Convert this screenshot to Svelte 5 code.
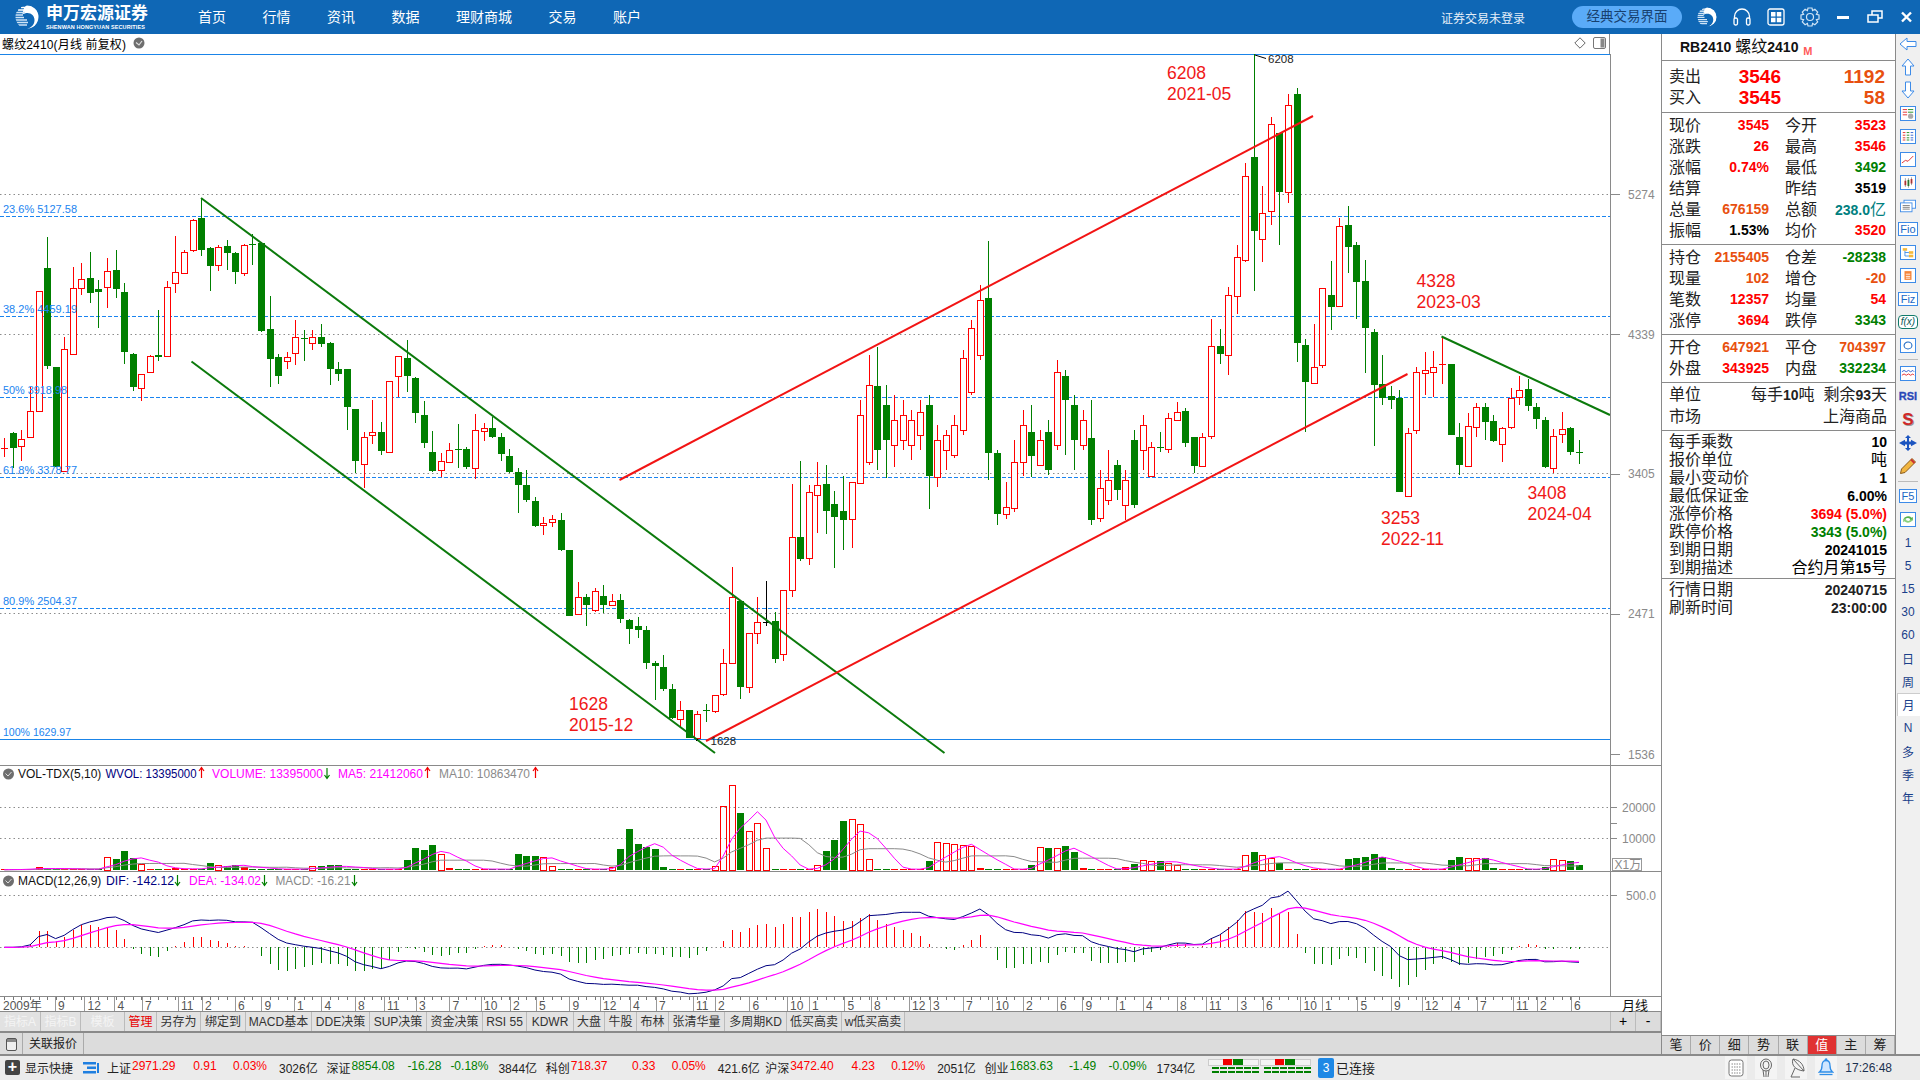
<script>
  // candle rows: [colour, high, bodyTop, bodyBottom, low], y as read off the chart (zoomed rows get scaled)
  const scaled = (rows, off) => rows.map(([c, h, t, b, l]) => [c, h / 3 + off, t / 3 + off, b / 3 + off, l / 3 + off]);
  const candles = [
    ...scaled([
      ['r',745,775,778,800],['g',725,730,776,835],['r',720,748,770,812],['r',590,664,743,743],['r',304,304,664,664],
      ['g',141,234,527,537],['g',531,531,830,830],['r',441,478,845,845],['r',232,295,493,493],['r',220,268,295,315],
      ['g',186,265,311,339],['g',270,297,305,413],['r',205,244,293,353],['g',180,240,296,323],['g',280,306,485,521],
      ['g',488,492,590,602],['r',553,553,596,632],['r',495,499,547,547],['g',360,495,500,512],['r',274,292,500,500],
      ['r',138,247,281,308],['r',181,187,250,250],['r',88,91,182,185],['g',25,84,180,198],['g',170,174,227,302],
      ['r',166,172,227,242],['g',150,168,188,240],['g',186,189,245,281],['r',163,166,250,257],['g',133,162,164,224],
      ['g',155,160,425,425],['g',318,417,506,590],['g',493,501,557,582],['r',486,502,514,537],['r',390,442,490,524],
      ['g',420,445,449,513],['r',420,440,457,480],['g',402,441,461,471],['g',457,459,536,585],['g',516,537,551,573],
      ['g',537,537,650,719],['g',657,657,812,848],['r',727,742,823,893],['r',630,727,737,762],['g',696,726,782,795],
      ['r',574,574,787,787],['r',499,499,559,622],['g',450,504,557,606],['g',562,564,668,698],['g',633,676,761,773],
      ['g',724,787,845,847],['r',790,814,842,862],['r',760,781,818,820],['g',702,777,779,833],['g',772,778,833,836],
      ['r',672,721,835,866],['r',700,715,724,752],['g',680,714,741,745],['g',728,741,791,812],['g',778,798,845,850],
    ], 190),
    ...scaled([
      ['g',25,36,74,158],['g',30,75,120,125],['g',112,123,198,200],['r',170,190,196,224],['r',165,178,187,200],
      ['g',158,180,270,273],['g',270,270,467,467],['r',365,412,464,464],['g',403,412,435,497],['r',385,394,452,456],
      ['g',375,408,435,459],['r',402,424,437,437],['g',402,420,476,488],['g',478,480,507,551],['g',472,498,510,533],
      ['g',498,510,608,627],['g',602,608,618,719],['g',586,621,687,692],['g',672,687,773,777],['r',723,751,779,800],
      ['g',750,750,834,834],['r',754,763,834,838],['g',733,749,751,785],['r',706,706,755,758],['r',567,610,704,707],
      ['r',321,412,610,610],['g',420,424,681,717],['r',520,520,683,698],['r',410,487,520,552],['k',363,485,485,497],
      ['g',456,483,596,608],['r',391,391,583,603],['r',72,232,391,411],['g',3,232,298,302],['r',75,97,295,314],
      ['r',7,76,107,218],['g',15,72,152,222],['g',93,132,170,323],['g',49,153,179,269],['r',67,67,178,263],
    ], 460),
    ['r',400,415,483,483],['r',355,385,462,465],['g',347,386,450,470],['g',385,405,440,478],['r',395,420,445,467],
    ['r',400,415,440,450],['r',410,420,445,460],['r',400,412,435,450],['g',395,405,476,509],['r',425,440,477,487],
    ['r',430,435,450,470],['r',415,425,455,458],['r',350,358,430,435],['r',320,328,392,395],['r',285,300,355,360],
    ['g',241,298,453,480],['g',450,453,514,525],['r',482,507,514,519],['r',440,462,508,512],['r',410,425,462,476],
    ['g',405,432,456,477],['r',430,440,465,466],['g',420,432,470,475],['r',360,372,445,450],['g',370,376,400,455],
    ['g',395,405,440,470],['r',410,420,445,450],['g',400,438,520,525],['r',470,488,518,522],['r',450,480,500,505],
    ['g',460,465,490,500],['r',470,480,505,520],['g',430,440,505,508],['r',415,425,450,470],
    ...scaled([
      ['r',1205,1222,1310,1310],['g',1176,1222,1226,1237],['r',1120,1135,1228,1238],['r',1087,1117,1140,1140],
      ['g',1105,1113,1208,1220],['g',1191,1191,1277,1299],['r',1180,1192,1279,1279],['r',837,919,1190,1196],
      ['g',867,918,941,971],['r',741,766,946,1005],['r',615,652,769,822],['r',370,409,662,665],['g',42,351,572,752],
      ['r',437,520,598,665],['r',232,253,514,555],['g',278,278,455,614],['r',163,196,457,488],['g',144,162,908,966],
      ['g',898,915,1025,1175],['r',852,980,1027,1027],['r',745,745,976,985],['g',663,765,800,869],['r',535,559,799,799],
      ['g',498,556,623,699],['g',606,615,725,838],['g',660,723,863,998],['g',868,876,1034,1217],['g',945,1033,1075,1095],
      ['g',1037,1069,1082,1107],['g',1051,1074,1355,1357],['r',1165,1180,1369,1369],['r',982,997,1171,1181],
      ['r',937,991,1000,1065],['r',933,980,994,1072],['r',890,973,975,1031],['g',972,972,1184,1184],['g',1149,1191,1274,1306],
      ['r',1119,1159,1279,1279],['r',1090,1102,1162,1190],['g',1090,1102,1148,1199],['g',1125,1144,1205,1207],
      ['r',1162,1165,1213,1265],['r',1044,1075,1162,1166],['r',1008,1049,1070,1094],['g',1016,1048,1100,1112],
      ['g',1090,1102,1139,1166],['g',1132,1141,1281,1283],['r',1167,1189,1285,1299],['r',1116,1166,1180,1209],
      ['g',1162,1165,1238,1246],['g',1200,1237,1238,1271],
    ], 40),
  ];

  const cx = (i) => 4.3 + 8.558 * i;
  const px = (v) => Math.round(v) + 0.5;
  const colour = { r: '#ff0000', g: '#007f00', k: '#000000' };

  // volume bar tops read from the pane, everything else is a short bar on the base line
  const volTop = {
    4:322,5:324,6:328,12:292,13:297,14:273,15:294,16:312,17:327,20:324,24:309,25:316,26:317,27:316,28:322,
    36:319,37:318,38:315,39:316,47:300,48:264,49:270,50:255,51:282,52:324,60:282,61:288,62:288,63:292,64:319,
    71:320,72:267,73:207,74:252,75:262,76:267,77:320,83:319,84:139,85:75,86:159,87:213,88:190,89:265,90:328,
    95:316,96:272,97:240,98:183,99:178,100:193,101:298,108:303,109:247,110:250,111:253,112:256,113:258,114:325,
    120:316,121:262,122:264,123:264,124:258,125:275,126:324,131:322,132:312,133:300,134:303,135:303,136:308,137:314,
    145:286,146:276,147:285,148:293,149:310,150:326,157:297,158:294,159:291,160:282,161:291,162:324,
    169:300,170:291,171:295,172:295,173:295,174:324,180:320,181:298,182:300,183:303,184:315,
  };
  const volBase = 870;
  const vols = candles.map((_, i) => (330 - (volTop[i] ?? (i % 3 === 0 ? 326 : 328))) / 3);
  const rolling = (n) => vols.map((_, i) => {
    const part = vols.slice(Math.max(0, i - n + 1), i + 1);
    return part.reduce((a, b) => a + b, 0) / n;
  });
  const toLine = (vals, f) => vals.map((v, i) => `${cx(i).toFixed(1)},${f(v).toFixed(1)}`).join(' ');
  const ma5Line = toLine(rolling(5), (v) => volBase - v);
  const ma10Line = toLine(rolling(10), (v) => volBase - v);

  // macd worked out from the closes
  const price = (y) => 5274 - (y - 194) * 6.69;
  const closes = candles.map(([c, , t, b]) => price(c === 'r' ? t : b));
  const ema = (vals, n) => {
    const out = [];
    vals.forEach((v, i) => out.push(i ? out[i - 1] + (v - out[i - 1]) * 2 / (n + 1) : v));
    return out;
  };
  const e12 = ema(closes, 12);
  const e26 = ema(closes, 26);
  const dif = e12.map((v, i) => v - e26[i]);
  const dea = ema(dif, 9);
  const zero = 947.3;
  const my = (v) => zero - v * 0.1047;
  const difLine = toLine(dif, my);
  const deaLine = toLine(dea, my);

  const fibs = [
    { y: 216, ty: 213, text: '23.6% 5127.58', w: 74 },
    { y: 316, ty: 313, text: '38.2% 4459.19', w: 74 },
    { y: 397, ty: 394, text: '50% 3918.98', w: 64 },
    { y: 477, ty: 474, text: '61.8% 3378.77', w: 74 },
    { y: 608, ty: 605, text: '80.9% 2504.37', w: 74 },
    { y: 739.5, ty: 736, text: '100% 1629.97', w: 68 },
  ];
  const grid = [194, 334, 473, 613];
  const axis = [
    { y: 194, t: '5274' }, { y: 334, t: '4339' }, { y: 473.5, t: '3405' }, { y: 613.5, t: '2471' }, { y: 754, t: '1536' },
  ];
  const notes = [
    { x: 1167, y: 79, a: '6208', b: '2021-05' },
    { x: 1416.5, y: 287, a: '4328', b: '2023-03' },
    { x: 1527.5, y: 499, a: '3408', b: '2024-04' },
    { x: 1381, y: 524, a: '3253', b: '2022-11' },
    { x: 569, y: 710, a: '1628', b: '2015-12' },
  ];
  const months = [
    [58,'9'],[87.5,'12'],[117.6,'4'],[145,'7'],[181,'11'],[205,'2'],[238,'6'],[264.5,'9'],[297,'1'],[324.5,'4'],[358,'8'],
    [387,'11'],[419,'3'],[452.5,'7'],[484,'10'],[513,'2'],[539,'5'],[572.5,'9'],[603,'12'],[633,'4'],[659,'7'],[696,'11'],
    [718,'2'],[752.6,'6'],[790,'10'],[812,'1'],[847.5,'5'],[874,'8'],[912,'12'],[933,'3'],[966,'7'],[995.5,'10'],[1026,'2'],
    [1060,'6'],[1085.5,'9'],[1119,'1'],[1146,'4'],[1180,'8'],[1209,'11'],[1240.5,'3'],[1266,'6'],[1303.5,'10'],[1325,'1'],
    [1360.5,'5'],[1394,'9'],[1425,'12'],[1454,'4'],[1480,'7'],[1516,'11'],[1540,'2'],[1574,'6'],
  ];

  const nav = ['首页', '行情', '资讯', '数据', '理财商城', '交易', '账户'];
  const tabs = [
    ['指标A', 41], ['指标B', 40], ['模板', 44], ['管理', 32], ['另存为', 44], ['绑定到', 45], ['MACD基本', 66], ['DDE决策', 58],
    ['SUP决策', 57], ['资金决策', 56], ['RSI 55', 44], ['KDWR', 47], ['大盘', 31], ['牛股', 32], ['布林', 32], ['张清华量', 56],
    ['多周期KD', 62], ['低买高卖', 55], ['w低买高卖', 63],
  ];
  const sideTabs = ['笔', '价', '细', '势', '联', '值', '主', '筹'];
  const periods = ['1', '5', '15', '30', '60', '日', '周', '月', 'N', '多', '季', '年'];

  const quote = [
    ['现价', '3545', 'r', '今开', '3523', 'r'],
    ['涨跌', '26', 'r', '最高', '3546', 'r'],
    ['涨幅', '0.74%', 'r', '最低', '3492', 'g'],
    ['结算', '', 'k', '昨结', '3519', 'k'],
    ['总量', '676159', 'o', '总额', '238.0亿', 't'],
    ['振幅', '1.53%', 'k', '均价', '3520', 'r'],
  ];
  const position = [
    ['持仓', '2155405', 'o', '仓差', '-28238', 'g'],
    ['现量', '102', 'o', '增仓', '-20', 'o'],
    ['笔数', '12357', 'r', '均量', '54', 'r'],
    ['涨停', '3694', 'r', '跌停', '3343', 'g'],
  ];
  const flow = [
    ['开仓', '647921', 'o', '平仓', '704397', 'o'],
    ['外盘', '343925', 'r', '内盘', '332234', 'g'],
  ];
  const specs = [
    ['每手乘数', '10', 'k'], ['报价单位', '吨', 'k'], ['最小变动价', '1', 'k'], ['最低保证金', '6.00%', 'k'],
    ['涨停价格', '3694 (5.0%)', 'r'], ['跌停价格', '3343 (5.0%)', 'g'], ['到期日期', '20241015', 'k'], ['到期描述', '合约月第15号', 'k'],
  ];
  const markets = [
    ['上证', '2971.29', 'r', '0.91', 'r', '0.03%', 'r', '3026亿'],
    ['深证', '8854.08', 'g', '-16.28', 'g', '-0.18%', 'g', '3844亿'],
    ['科创', '718.37', 'r', '0.33', 'r', '0.05%', 'r', '421.6亿'],
    ['沪深', '3472.40', 'r', '4.23', 'r', '0.12%', 'r', '2051亿'],
    ['创业', '1683.63', 'g', '-1.49', 'g', '-0.09%', 'g', '1734亿'],
  ];

  // digits come out bold in this panel, chinese stays regular
  const parts = (text) => text.split(/([\u4e00-\u9fff]+)/);
</script>

{#snippet logo(size)}
  <svg class="swirl" width={size} height={size} viewBox="0 0 24 24">
    <defs>
      <clipPath id="ring-{size}"><circle cx="12" cy="12" r="11.5" /></clipPath>
    </defs>
    <g clip-path="url(#ring-{size})">
      <path d="M12 0a12 12 0 0 1 0 24c5-1.500 7.500-5 7.500-9 0-4-3-7-7-7-2 0-3.500.5-5 1.500C8 4 10 1 12 0z" fill="#fff" />
      <path d="M0 7.500h10M0 10h8M0 12.500h9M0 15h12M0 17.500h13M0 20h12" stroke="#cfe4f6" stroke-width="1.500" />
      <path d="M6 2.500h6M3 5h7" stroke="#fff" stroke-width="1.500" />
    </g>
  </svg>
{/snippet}

{#snippet val(text, cls)}
  <b class={cls}>{#each parts(text) as p, i}{#if i % 2}<span class="cjk">{p}</span>{:else}{p}{/if}{/each}</b>
{/snippet}

{#snippet row(cells)}
  <div class="q-row">
    <div class="q-cell"><span>{cells[0]}</span>{@render val(cells[1], cells[2])}</div>
    <div class="q-cell"><span>{cells[3]}</span>{@render val(cells[4], cells[5])}</div>
  </div>
{/snippet}

<div class="app">
  <header class="topbar">
    <div class="brand">
      {@render logo(24)}
      <div class="brand-name">
        <strong>申万宏源证券</strong>
        <small>SHENWAN HONGYUAN SECURITIES</small>
      </div>
    </div>
    <nav class="nav">
      {#each nav as item}<span>{item}</span>{/each}
    </nav>
    <div class="login">证券交易未登录</div>
    <div class="pill">经典交易界面</div>
    <div class="top-icons">
      {@render logo(20)}
      <svg width="20" height="20" viewBox="0 0 20 20" fill="none" stroke="#fff" stroke-width="1.300"><path d="M2.500 12V9.500a7.500 7.500 0 0 1 15 0V12" /><rect x="2" y="11" width="3.500" height="7" rx="1.500" /><rect x="14.500" y="11" width="3.500" height="7" rx="1.500" /></svg>
      <svg width="18" height="18" viewBox="0 0 18 18"><rect x="1" y="1" width="16" height="16" rx="2" fill="none" stroke="#fff" stroke-width="1.300" /><path d="M4 4h4.500v4.500H4zM9.800 4h4.500v4.500H9.800zM4 9.800h4.500v4.500H4zM9.800 9.800h4.500v4.500H9.800z" fill="#fff" /></svg>
      <svg width="20" height="20" viewBox="0 0 20 20" fill="none" stroke="#cfe4f6" stroke-width="1.200"><path d="M8 1.500h4l.6 2.600 2.300-1.300 2.800 2.800-1.300 2.300 2.600.6v4l-2.600.6 1.300 2.300-2.800 2.800-2.300-1.300-.6 2.600H8l-.6-2.600-2.300 1.300-2.800-2.800 1.300-2.300-2.600-.6v-4l2.600-.6-1.300-2.300 2.800-2.800 2.300 1.300z" transform="translate(0 -.5)" /><circle cx="10" cy="10" r="3.500" /></svg>
      <svg class="win" width="13" height="14" viewBox="0 0 13 14"><rect y="6" width="12" height="3" fill="#fff" /></svg>
      <svg class="win" width="16" height="14" viewBox="0 0 16 14" fill="none" stroke="#fff" stroke-width="1.500"><rect x="5" y="1" width="10" height="7" /><rect x="1" y="5" width="10" height="7" fill="#0f67b5" /></svg>
      <svg class="win" width="13" height="14" viewBox="0 0 13 14" stroke="#fff" stroke-width="2.400"><path d="M2 2.500l9 9M11 2.500l-9 9" /></svg>
    </div>
  </header>

  <div class="work">
    <div class="left">
      <div class="title-row">
        <div class="title-main">
          <span class="title-text">螺纹2410(月线 前复权)</span>
          <svg class="check" width="12" height="12" viewBox="0 0 12 12"><circle cx="6" cy="6" r="5.500" fill="#6e6e6e" /><path d="M3 5.500l3 2.500 3-4" fill="none" stroke="#ddd" stroke-width="1.200" /></svg>
          <span class="title-tools">
            <svg width="12" height="12" viewBox="0 0 12 12"><path d="M6 .8L11.200 6 6 11.200.8 6z" fill="#fff" stroke="#666" /></svg>
            <svg width="13" height="12" viewBox="0 0 13 12"><rect x=".5" y=".5" width="12" height="11" rx="1.500" fill="#fff" stroke="#777" /><rect x="7.500" y="1.500" width="4" height="9" fill="#888" /></svg>
          </span>
        </div>
      </div>

      <svg class="chart" width="1661" height="958" viewBox="0 54 1661 958">
        <!-- main pane grid -->
        {#each grid as y}<line class="dots" x1="0" x2="1611" y1={px(y)} y2={px(y)} />{/each}
        {#each fibs as f}
          {#if f.y < 700}<line class="fib" x1="0" x2="1611" y1={px(f.y)} y2={px(f.y)} />{/if}
        {/each}
        <line class="solid-blue" x1="0" x2="1611" y1="54.500" y2="54.500" />
        <line class="solid-blue" x1="0" x2="1611" y1="739.500" y2="739.500" />

        <!-- candles -->
        <g shape-rendering="crispEdges">
          {#each candles as [c, hi, top, bot, lo], i}
            {@const x = Math.round(cx(i))}
            <line x1={x + 0.5} x2={x + 0.5} y1={hi} y2={lo} stroke={colour[c]} />
            {#if bot - top < 1.500}
              <line x1={x - 3} x2={x + 4} y1={px(top)} y2={px(top)} stroke={colour[c]} />
            {:else if c === 'r'}
              <rect x={x - 2.500} y={px(top)} width="6" height={Math.round(bot - top)} fill="#fff" stroke={colour[c]} />
            {:else}
              <rect x={x - 3} y={Math.round(top)} width="7" height={Math.round(bot - top)} fill={colour[c]} />
            {/if}
          {/each}
        </g>
        {#each fibs as f}<text class="fib-label" x="3" y={f.ty} textLength={f.w} lengthAdjust="spacingAndGlyphs">{f.text}</text>{/each}

        <!-- hand drawn lines -->
        <line class="tl-green" x1="201" y1="198" x2="944.500" y2="753" />
        <line class="tl-green" x1="191.500" y1="361.500" x2="715" y2="753" />
        <line class="tl-green" x1="1441.500" y1="336.500" x2="1610" y2="415" />
        <line class="tl-red" x1="619.500" y1="480" x2="1313" y2="116" />
        <line class="tl-red" x1="706" y1="741" x2="1407.500" y2="374" />

        {#each notes as n}
          <text class="note" x={n.x} y={n.y}>{n.a}</text>
          <text class="note" x={n.x} y={n.y + 21}>{n.b}</text>
        {/each}
        <path d="M1255 55l11 3.500" stroke="#000" fill="none" />
        <text class="mark" x="1268" y="63">6208</text>
        <path d="M698 739l-2 2" stroke="#000" fill="none" />
        <text class="mark" x="710.500" y="745">1628</text>

        <!-- value axis -->
        <line class="frame" x1="1610.500" x2="1610.500" y1="54" y2="997" />
        {#each axis as a}
          <line class="frame" x1="1611" x2="1620" y1={px(a.y)} y2={px(a.y)} />
          <text class="axis" x="1628" y={a.y + 4.500}>{a.t}</text>
        {/each}
        <line class="frame" x1="0" x2="1661" y1="765.500" y2="765.500" />
        <line class="frame" x1="0" x2="1661" y1="871.500" y2="871.500" />
        <line class="frame" x1="0" x2="1661" y1="996.500" y2="996.500" />
        <line class="frame" x1="0" x2="1661" y1="1011.500" y2="1011.500" />

        <!-- volume pane -->
        <line class="dots" x1="0" x2="1611" y1="807.500" y2="807.500" />
        <line class="dots" x1="0" x2="1611" y1="838.500" y2="838.500" />
        <g shape-rendering="crispEdges">
          {#each vols as v, i}
            {@const x = Math.round(cx(i))}
            {@const c = colour[candles[i][0] === 'k' ? 'r' : candles[i][0]]}
            {#if candles[i][0] === 'g' || v < 3}
              <rect x={x - 3} y={Math.round(volBase - v)} width="7" height={Math.max(1, Math.round(v))} fill={c} />
            {:else}
              <rect x={x - 2.500} y={Math.round(volBase - v) + 0.5} width="6" height={Math.round(v)} fill="none" stroke={c} />
            {/if}
          {/each}
        </g>
        <polyline class="ma10" points={ma10Line} />
        <polyline class="ma5" points={ma5Line} />
        <text class="legend" x="18" y="778">VOL-TDX(5,10)</text>
        <circle class="dot" cx="8.500" cy="774" r="5.500" />
        <path class="dot-tick" d="M5.500 773.500l2.500 2.500 3.500-4" />
        <text class="legend navy" x="105.500" y="778" textLength="91" lengthAdjust="spacingAndGlyphs">WVOL: 13395000</text>
        <path class="arr r" d="M201.500 778v-10m-2.500 3l2.500-3.500 2.500 3.500" />
        <text class="legend pink" x="212" y="778" textLength="111" lengthAdjust="spacingAndGlyphs">VOLUME: 13395000</text>
        <path class="arr g" d="M327 768v10m-2.500-3l2.500 3.500 2.500-3.500" />
        <text class="legend pink" x="338" y="778" textLength="85" lengthAdjust="spacingAndGlyphs">MA5: 21412060</text>
        <path class="arr r" d="M427.500 778v-10m-2.500 3l2.500-3.500 2.500 3.500" />
        <text class="legend grey" x="439" y="778" textLength="91" lengthAdjust="spacingAndGlyphs">MA10: 10863470</text>
        <path class="arr r" d="M535.500 778v-10m-2.500 3l2.500-3.500 2.500 3.500" />
        <text class="axis" x="1622" y="811.500">20000</text>
        <text class="axis" x="1622" y="842.500">10000</text>
        <line class="frame" x1="1611" x2="1617" y1="807.500" y2="807.500" />
        <line class="frame" x1="1611" x2="1617" y1="823.500" y2="823.500" />
        <line class="frame" x1="1611" x2="1617" y1="838.500" y2="838.500" />
        <rect x="1612.500" y="858.500" width="29" height="12" fill="#fff" stroke="#999" />
        <text class="axis" x="1614.500" y="869">X1万</text>

        <!-- macd pane -->
        <line class="dots" x1="0" x2="1611" y1="895.500" y2="895.500" />
        <line class="dots" x1="0" x2="1611" y1={px(zero)} y2={px(zero)} />
        <text class="axis" x="1626" y="899.500">500.0</text>
        <line class="frame" x1="1611" x2="1617" y1="895.500" y2="895.500" />
        <g shape-rendering="crispEdges">
          {#each dif as v, i}
            {@const m = 2 * (v - dea[i])}
            <line x1={Math.round(cx(i)) + 0.5} x2={Math.round(cx(i)) + 0.5} y1={zero} y2={my(m)} stroke={m >= 0 ? '#ff0000' : '#007f00'} />
          {/each}
        </g>
        <polyline class="dif" points={difLine} />
        <polyline class="dea" points={deaLine} />
        <text class="legend" x="18" y="885">MACD(12,26,9)</text>
        <circle class="dot" cx="8.500" cy="881" r="5.500" />
        <path class="dot-tick" d="M5.500 880.500l2.500 2.500 3.500-4" />
        <text class="legend navy" x="106" y="885" textLength="68" lengthAdjust="spacingAndGlyphs">DIF: -142.12</text>
        <path class="arr g" d="M177.500 875v10m-2.500-3l2.500 3.500 2.500-3.500" />
        <text class="legend pink" x="189" y="885" textLength="72" lengthAdjust="spacingAndGlyphs">DEA: -134.02</text>
        <path class="arr g" d="M264.500 875v10m-2.500-3l2.500 3.500 2.500-3.500" />
        <text class="legend grey" x="275.500" y="885" textLength="75" lengthAdjust="spacingAndGlyphs">MACD: -16.21</text>
        <path class="arr g" d="M354.500 875v10m-2.500-3l2.500 3.500 2.500-3.500" />

        <!-- date axis -->
        <g shape-rendering="crispEdges">
          {#each candles as _, i}
            <line x1={Math.round(cx(i)) + 0.5} x2={Math.round(cx(i)) + 0.5} y1="997" y2="1000" stroke="#777" />
          {/each}
          {#each months as [x]}
            <line x1={Math.round(x - 3.500) + 0.5} x2={Math.round(x - 3.500) + 0.5} y1="997" y2="1011" stroke="#999" />
          {/each}
        </g>
        <text class="date" x="3" y="1010">2009年</text>
        {#each months as [x, t]}<text class="date" x={x} y="1010">{t}</text>{/each}
        <text class="period" x="1622" y="1010">月线</text>
      </svg>

      <div class="tab-row">
        <div class="tabs">
          {#each tabs as [t, w], i}
            <span class="tab" class:off={i < 3} class:hot={i === 3} style="width: {w}px">{t}</span>
          {/each}
        </div>
        <div class="zoom-btns"><span>+</span><span>-</span></div>
      </div>
      <div class="link-row">
        <span class="link-icon"><i></i></span>
        <span class="link-tab">关联报价</span>
      </div>
    </div>

    <aside class="panel">
      <div class="p-head">RB2410 <span class="cjk">螺纹</span>2410 <em>M</em></div>
      <div class="p-sec sell">
        <div class="sell-row"><span>卖出</span><b class="r">3546</b><b class="o">1192</b></div>
        <div class="sell-row"><span>买入</span><b class="r">3545</b><b class="o">58</b></div>
      </div>
      <div class="p-sec">{#each quote as q}{@render row(q)}{/each}</div>
      <div class="p-sec">{#each position as q}{@render row(q)}{/each}</div>
      <div class="p-sec">{#each flow as q}{@render row(q)}{/each}</div>
      <div class="p-sec unit">
        <div class="wide"><span>单位</span><span class="mix">每手<b>10</b>吨&nbsp; 剩余<b>93</b>天</span></div>
        <div class="wide"><span>市场</span><span>上海商品</span></div>
      </div>
      <div class="p-sec spec">
        {#each specs as s}
          <div class="wide"><span>{s[0]}</span>{@render val(s[1], s[2])}</div>
        {/each}
      </div>
      <div class="p-fill spec">
        <div class="wide"><span>行情日期</span><b>20240715</b></div>
        <div class="wide"><span>刷新时间</span><b>23:00:00</b></div>
      </div>
      <div class="side-tabs">
        {#each sideTabs as t}<span class:on={t === '值'}>{t}</span>{/each}
      </div>
    </aside>

    <div class="tools">
      <span class="tool"><svg width="18" height="14" viewBox="0 0 18 14"><path d="M1 7l7-6v3.500h9v5H8V13z" fill="#fff" stroke="#3d8be8" /></svg></span>
      <span class="tool"><svg width="14" height="18" viewBox="0 0 14 18"><path d="M7 1l6 7H9.500v9h-5V8H1z" fill="#fff" stroke="#3d8be8" /></svg></span>
      <span class="tool"><svg width="14" height="18" viewBox="0 0 14 18"><path d="M7 17l6-7H9.500V1h-5v9H1z" fill="#fff" stroke="#3d8be8" /></svg></span>
      <span class="tool"><svg class="box" width="14" height="13" viewBox="0 0 16 14"><path d="M2 2.500h5M2 5.500h5M2 8.500h5" stroke="#e02020" /><path d="M8 2.500h6M8 5.500h6" stroke="#118811" /><circle cx="11" cy="10" r="3" fill="#aaa" /></svg></span>
      <span class="tool"><svg class="box" width="14" height="13" viewBox="0 0 16 14"><path d="M2 2.500h3M2 5.500h3M2 8.500h3M2 11h3" stroke="#e02020" /><path d="M6.500 2.500h3M6.500 5.500h3M6.500 8.500h3M6.500 11h3" stroke="#118811" /><path d="M11 2.500h3M11 5.500h3M11 8.500h3M11 11h3" stroke="#2255cc" /></svg></span>
      <span class="tool"><svg class="box" width="14" height="13" viewBox="0 0 16 14"><path d="M1 11l4-3 3 1 6-6" fill="none" stroke="#e02020" /></svg></span>
      <span class="tool"><svg class="box" width="14" height="13" viewBox="0 0 16 14"><path d="M4 5h2v5H4zM11 3h2v5h-2z" fill="#e02020" /><path d="M7.500 4h2v7h-2z" fill="#118811" /><path d="M5 2v10M8.500 2v11M12 1v9" stroke="#555" stroke-width=".6" /></svg></span>
      <span class="tool"><svg width="16" height="14" viewBox="0 0 18 14"><rect x="4.500" y=".5" width="13" height="9" fill="#fff" stroke="#3d8be8" /><rect x=".5" y="3.500" width="13" height="10" fill="#fff" stroke="#3d8be8" /><path d="M3 6.500h8M3 8.500h8M3 10.500h8" stroke="#777" /></svg></span>
      <span class="tool"><b class="tag">Fio</b></span>
      <span class="tool"><svg class="box" width="14" height="13" viewBox="0 0 16 14"><rect x="2" y="2" width="5" height="3" fill="#f6b93b" /><rect x="9" y="5.500" width="5" height="3" fill="#f6b93b" /><rect x="9" y="9.500" width="5" height="3" fill="#f6b93b" /><path d="M4.500 5v6H9M4.500 7H9" fill="none" stroke="#3d8be8" /></svg></span>
      <span class="tool"><svg class="box" width="14" height="13" viewBox="0 0 16 14"><rect x="4" y="2" width="8" height="10" fill="#f5853a" /><path d="M5.500 5.500h5M5.500 8h5M5.500 10h5" stroke="#fff" /></svg></span>
      <span class="tool"><b class="tag">Fiz</b></span>
      <span class="tool"><b class="tag fx">f(x)</b></span>
      <span class="tool"><svg class="box" width="14" height="13" viewBox="0 0 16 14"><ellipse cx="8" cy="7" rx="4.500" ry="4" fill="none" stroke="#1c68c4" stroke-width="1.200" /></svg></span>
      <i class="sep"></i>
      <span class="tool"><svg class="box" width="14" height="13" viewBox="0 0 16 14"><path d="M1 5l2.500-1.500L6 5l2.500-1.500L11 5l2.500-1.500L15 5" fill="none" stroke="#2255cc" /><path d="M1 9l2.500-1.500L6 9l2.500-1.500L11 9l2.500-1.500L15 9" fill="none" stroke="#e02020" /></svg></span>
      <span class="tool"><b class="rsi">RSI</b></span>
      <span class="tool"><b class="ess">S</b></span>
      <span class="tool"><svg width="18" height="16" viewBox="0 0 18 16"><path d="M9 0l3 3H10v3.500h2V4.800L18 8l-6 3.200V9.500h-2V13h2l-3 3-3-3h2V9.500H6v1.700L0 8l6-3.200v1.700h2V3H6z" fill="#1c55c0" /></svg></span>
      <span class="tool"><svg width="18" height="18" viewBox="0 0 18 18"><path d="M13 1.500l3.500 3.500L6 15.500 1.500 16.500 2.500 12z" fill="#f2b640" stroke="#8a5a1a" /><path d="M12 2.500l3.500 3.500" stroke="#c33" stroke-width="2" /></svg></span>
      <i class="sep wide-sep"></i>
      <span class="tool"><b class="tag">F5</b></span>
      <span class="tool"><svg class="box" width="14" height="13" viewBox="0 0 16 14"><path d="M3 7a5 4 0 0 1 9-2l1.500-1v4h-4l1.200-1A3.500 3 0 0 0 4.500 7z" fill="#55b04a" /><path d="M13 7a5 4 0 0 1-9 2l-1.500 1V6h4L5.300 7a3.500 3 0 0 0 6.200 0z" fill="#8ad07e" /></svg></span>
      {#each periods as p}
        <span class="tool per" class:now={p === '月'}>{p}</span>
      {/each}
    </div>
  </div>

  <footer class="status">
    <span class="plus">+</span>
    <span class="quick">显示快捷</span>
    <svg class="quick-icon" width="17" height="14" viewBox="0 0 17 14"><path d="M0 1h13v2.500H0zM4 5.500h9V8H4zM0 10h13v2.500H0z" fill="#1f7fe0" /><path d="M15 2v10" stroke="#1f7fe0" stroke-width="2" /></svg>
    <div class="markets">
      {#each markets as m}
        <div class="market">
          <span>{m[0]}</span>
          <span class={m[2]}>{m[1]}</span>
          <span class="mid {m[4]}">{m[3]}</span>
          <span class="mid {m[6]}">{m[5]}</span>
          <span>{m[7]}</span>
        </div>
      {/each}
    </div>
    <svg class="meter" width="104" height="17" viewBox="0 0 104 17">
      {#each [0, 52] as off}
        <g transform="translate({off} 0)" shape-rendering="crispEdges">
          <rect x="0" y="0" width="50" height="6" fill="#f4f4f4" stroke="#ccc" />
          <rect x="15" y="0" width="9" height="6" fill="#f00000" />
          <rect x="25" y="0" width="10" height="6" fill="#007f00" />
          {#each [0, 1, 2, 3, 4, 5] as k}
            <rect x={4 + k * 8} y="8" width="7" height="2" fill="#007f00" />
            <rect x={4 + k * 8} y="12" width="7" height="2" fill="#007f00" />
          {/each}
        </g>
      {/each}
    </svg>
    <span class="badge">3</span>
    <span class="conn">已连接</span>
    <div class="status-icons">
      <span><svg width="16" height="18" viewBox="0 0 16 18"><rect x="1" y="1" width="14" height="16" rx="2.500" fill="#fff" stroke="#777" /><path d="M3.500 5h9M3.500 8h9M3.500 11h9M3.500 14h9" stroke="#888" stroke-dasharray="1.500 1" /></svg></span>
      <span><svg width="14" height="20" viewBox="0 0 14 20" fill="none" stroke="#666"><ellipse cx="7" cy="7" rx="5.500" ry="6" /><ellipse cx="7" cy="7" rx="3" ry="4" /><path d="M4 12l1 7M10 12l-1 7M7 13v6" /></svg></span>
      <span><svg width="18" height="20" viewBox="0 0 18 20" fill="none" stroke="#666"><path d="M6 1c7 1 11 6 11 12L6 1zM6 1c-2 6 2 11 11 12" /><path d="M8 10l-4 9h9" /></svg></span>
      <span><svg width="16" height="20" viewBox="0 0 16 20" fill="#cfe6ff" stroke="#2f8ee8" stroke-width="1.300"><path d="M8 2.500c3 0 4 2.500 4 5s.5 5 2.500 6.500h-13C3.500 12.500 4 10 4 7.500s1-5 4-5z" /><path d="M1.500 16.500h13" /><circle cx="8" cy="1.800" r=".8" /></svg></span>
    </div>
    <span class="clock">17:26:48</span>
  </footer>
</div>

<style>
  :global(body) {
    margin: 0;
    background: #fff;
  }

  .app {
    --cjk: "Liberation Sans", "Noto Sans CJK SC", sans-serif;
    width: 1920px;
    height: 1080px;
    display: flex;
    flex-direction: column;
    overflow: hidden;
    font-family: var(--cjk);
    font-size: 12px;
    color: #000;
  }

  .topbar {
    height: 34px;
    flex: none;
    display: flex;
    align-items: center;
    background: #0f67b5;
    color: #fff;
  }

  .brand {
    display: flex;
    align-items: center;
    gap: 7px;
    width: 198px;
    padding-left: 15px;
    box-sizing: border-box;
  }

  .swirl {
    flex: none;
  }

  .brand-name {
    display: flex;
    flex-direction: column;
  }

  .brand-name strong {
    font-size: 17px;
    line-height: 19px;
    font-weight: 700;
  }

  .brand-name small {
    font-size: 5.500px;
    line-height: 8px;
    font-weight: 700;
    white-space: nowrap;
    letter-spacing: 0.1px;
  }

  .nav {
    display: flex;
    gap: 36.500px;
    font-size: 14px;
    width: 1243px;
    padding-bottom: 2px;
  }

  .login {
    width: 131px;
    font-size: 12px;
    color: #e4eef8;
  }

  .pill {
    width: 110px;
    height: 22px;
    border-radius: 11px;
    background: #5aabf8;
    color: #17406e;
    font-size: 13.500px;
    text-align: center;
    line-height: 22px;
  }

  .top-icons {
    display: flex;
    align-items: center;
    gap: 15px;
    margin-left: 15px;
  }

  .win {
    margin-left: 2px;
  }

  .work {
    height: 1020px;
    flex: none;
    display: flex;
  }

  .left {
    width: 1661px;
    flex: none;
    display: flex;
    flex-direction: column;
  }

  .title-row {
    height: 20px;
    flex: none;
    display: flex;
  }

  .title-main {
    width: 1610px;
    display: flex;
    align-items: center;
    padding: 0 0 2px 2px;
    box-sizing: border-box;
    border-right: 1px solid #888;
  }

  .title-text {
    font-size: 12px;
    letter-spacing: 0.15px;
    margin-right: 7px;
  }

  .title-tools {
    margin-left: auto;
    display: flex;
    align-items: center;
    gap: 7px;
    padding-right: 3px;
  }

  .chart {
    display: block;
    flex: none;
  }

  .chart text {
    font-family: "Liberation Sans", "Noto Sans CJK SC", sans-serif;
  }

  .dots {
    stroke: #8c8c8c;
    stroke-dasharray: 1.500 3;
  }

  .fib {
    stroke: #1a84f0;
    stroke-dasharray: 4 2;
  }

  .solid-blue {
    stroke: #1a84e8;
  }

  .fib-label {
    font-size: 11.500px;
    fill: #1a84f0;
  }

  .tl-green {
    stroke: #0c7a0c;
    stroke-width: 2;
  }

  .tl-red {
    stroke: #f21414;
    stroke-width: 2;
  }

  .note {
    font-size: 17.500px;
    fill: #f01818;
  }

  .mark {
    font-size: 11.500px;
    fill: #222;
  }

  .frame {
    stroke: #8a8a8a;
  }

  .axis {
    font-size: 12px;
    fill: #8a8a8a;
  }

  .legend {
    font-size: 12px;
    fill: #111;
  }

  .legend.navy {
    fill: #000080;
  }

  .legend.pink {
    fill: #ff00ff;
  }

  .legend.grey {
    fill: #8a8a8a;
  }

  .arr {
    fill: none;
    stroke-width: 1.200;
  }

  .arr.r {
    stroke: #f00000;
  }

  .arr.g {
    stroke: #007f00;
  }

  .dot {
    fill: #6e6e6e;
  }

  .dot-tick {
    fill: none;
    stroke: #ddd;
  }

  .ma5 {
    fill: none;
    stroke: #ff00ff;
  }

  .ma10 {
    fill: none;
    stroke: #8a8a8a;
  }

  .dif {
    fill: none;
    stroke: #000080;
  }

  .dea {
    fill: none;
    stroke: #ff00ff;
    stroke-width: 1.200;
  }

  .date {
    font-size: 12px;
    fill: #555;
  }

  .period {
    font-size: 13px;
    fill: #111;
  }

  .tab-row {
    height: 19px;
    flex: none;
    display: flex;
    background: #dcdcdc;
    border-bottom: 2px solid #8a8a8a;
    box-sizing: content-box;
  }

  .tabs {
    flex: 1;
    display: flex;
  }

  .tab {
    box-sizing: border-box;
    flex: none;
    text-align: center;
    line-height: 20px;
    border-right: 1px solid #bbb;
    background: #e2e2e2;
    color: #333;
    white-space: nowrap;
  }

  .tab.off {
    color: #f4f4f4;
  }

  .tab.hot {
    color: #e80000;
  }

  .zoom-btns {
    display: flex;
    border-left: 1px solid #bbb;
  }

  .zoom-btns span {
    width: 25px;
    text-align: center;
    line-height: 19px;
    font-size: 14px;
    border-right: 1px solid #bbb;
    box-sizing: border-box;
  }

  .link-row {
    flex: 1;
    display: flex;
    background: #dcdcdc;
  }

  .link-icon {
    width: 22px;
    display: flex;
    align-items: center;
    justify-content: center;
    border-right: 1px solid #aaa;
  }

  .link-icon i {
    width: 9px;
    height: 11px;
    border: 1px solid #555;
    border-radius: 2px;
    background: linear-gradient(#888 0 3px, #eee 3px);
  }

  .link-tab {
    width: 60px;
    text-align: center;
    line-height: 22px;
    border-right: 1px solid #aaa;
    font-size: 12px;
    color: #222;
  }

  .panel {
    width: 235px;
    flex: none;
    display: flex;
    flex-direction: column;
    border-left: 1px solid #8a8a8a;
    border-right: 1px solid #8a8a8a;
    box-sizing: border-box;
    font-size: 16px;
    background: #fff;
    color: #222;
  }

  .p-head {
    height: 26px;
    flex: none;
    padding-left: 18px;
    box-sizing: content-box;
    font-size: 14px;
    font-weight: 700;
    line-height: 26px;
    border-bottom: 1px solid #8a8a8a;
    color: #111;
    white-space: nowrap;
  }

  .p-head .cjk {
    font-size: 16px;
    font-weight: 400;
  }

  .p-head em {
    font-style: normal;
    font-size: 11px;
    color: #ff5a5a;
    vertical-align: -3px;
    margin-left: 1px;
  }

  .p-sec {
    flex: none;
    padding: 2px 0 3px;
    border-bottom: 1px solid #8a8a8a;
  }

  .sell {
    padding: 5px 0 4px;
  }

  .sell-row {
    height: 21px;
    line-height: 21px;
    display: grid;
    grid-template-columns: 38px 74px 104px;
    padding-left: 7px;
  }

  .sell-row b {
    font-size: 19px;
    text-align: right;
  }

  .q-row {
    height: 21px;
    line-height: 21px;
    display: grid;
    grid-template-columns: 100px 101px;
    column-gap: 16px;
    padding-left: 7px;
  }

  .q-cell {
    display: flex;
    justify-content: space-between;
  }

  .q-cell b,
  .spec b,
  .mix b {
    font-size: 14px;
    font-weight: 700;
  }

  .cjk {
    font-size: 16px;
    font-weight: 400;
  }

  .unit {
    padding: 1px 0 2px;
  }

  .wide {
    display: flex;
    justify-content: space-between;
    padding: 0 8px 0 7px;
    white-space: nowrap;
  }

  .unit .wide {
    height: 22px;
    line-height: 22px;
  }

  .spec {
    padding: 2px 0 1px;
  }

  .spec .wide {
    height: 18px;
    line-height: 18px;
  }

  .p-fill {
    flex: 1;
    min-height: 0;
  }

  .side-tabs {
    flex: none;
    height: 18px;
    display: grid;
    grid-template-columns: repeat(8, 1fr);
    background: #dcdcdc;
    border-top: 1px solid #8a8a8a;
  }

  .side-tabs span {
    text-align: center;
    font-size: 13px;
    line-height: 18px;
    border-right: 1px solid #aaa;
  }

  .side-tabs .on {
    background: #e03232;
    color: #fff;
  }

  .tools {
    flex: 1;
    display: flex;
    flex-direction: column;
    background: #f0f0f0;
    overflow: hidden;
  }

  .tool {
    height: 23.200px;
    flex: none;
    display: flex;
    align-items: center;
    justify-content: center;
  }

  .tool:first-child {
    margin-top: -2px;
  }

  .box {
    background: #fff;
    outline: 1px solid #3d8be8;
  }

  .tag {
    font-size: 11px;
    line-height: 12px;
    padding: 0 1.500px;
    font-weight: 400;
    color: #1c68c4;
    background: #fff;
    border: 1px solid #3d8be8;
  }

  .tag.fx {
    color: #0a5a5a;
    border-color: #117a6a;
    border-radius: 4px;
    font-style: italic;
    font-size: 10px;
  }

  .rsi {
    font-size: 11px;
    color: #2a48b8;
    -webkit-text-stroke: 0.3px #2a48b8;
  }

  .ess {
    font-size: 17px;
    color: #d02828;
    text-shadow: 1px 1px 0 #999;
  }

  .sep {
    height: 1px;
    margin: 2px 2px;
    background: #bbb;
    flex: none;
  }

  .wide-sep {
    margin: 3px 2px;
  }

  .per {
    font-size: 12px;
    color: #1a3f8a;
  }

  .per.now {
    background: #fff;
    margin-left: 1px;
    box-shadow: inset 1px 1px 0 #ccc;
  }

  .status {
    flex: 1;
    display: flex;
    align-items: center;
    padding-bottom: 2px;
    background: #ebebeb;
    border-top: 2px solid #8a8a8a;
    box-sizing: border-box;
    font-size: 12px;
    color: #222;
    white-space: nowrap;
  }

  .plus {
    width: 15px;
    height: 15px;
    margin-left: 5px;
    border-radius: 2px;
    background: #444;
    color: #fff;
    text-align: center;
    line-height: 14px;
    font-size: 16px;
    font-weight: 700;
    flex: none;
  }

  .quick {
    margin-left: 5px;
    width: 58px;
    flex: none;
  }

  .quick-icon {
    flex: none;
    width: 17px;
    margin-right: 7px;
  }

  .markets {
    display: flex;
    flex: none;
    width: 1100px;
  }

  .market {
    width: 219.400px;
    flex: none;
    display: grid;
    grid-template-columns: 25px 57px 32px 58px 47px;
    white-space: nowrap;
  }

  .mid {
    display: flex;
    justify-content: center;
  }

  .meter {
    flex: none;
    margin-left: 1px;
    margin-right: 6px;
  }

  .badge {
    width: 16px;
    height: 20px;
    border-radius: 2px;
    background: #1e88e5;
    color: #fff;
    text-align: center;
    line-height: 20px;
    flex: none;
  }

  .conn {
    margin-left: 2px;
    font-size: 13px;
  }

  .status-icons {
    display: flex;
    gap: 8px;
    margin-left: auto;
  }

  .status-icons span {
    width: 22px;
    height: 23px;
    display: flex;
    align-items: center;
    justify-content: center;
    background: #f4f4f4;
  }

  .clock {
    margin: 0 28px 0 8px;
    color: #1a3050;
  }

  .r { color: #ff0000; }
  .o { color: #e8500f; }
  .g { color: #007f00; }
  .t { color: #008080; }
  .k { color: #000; }
</style>
